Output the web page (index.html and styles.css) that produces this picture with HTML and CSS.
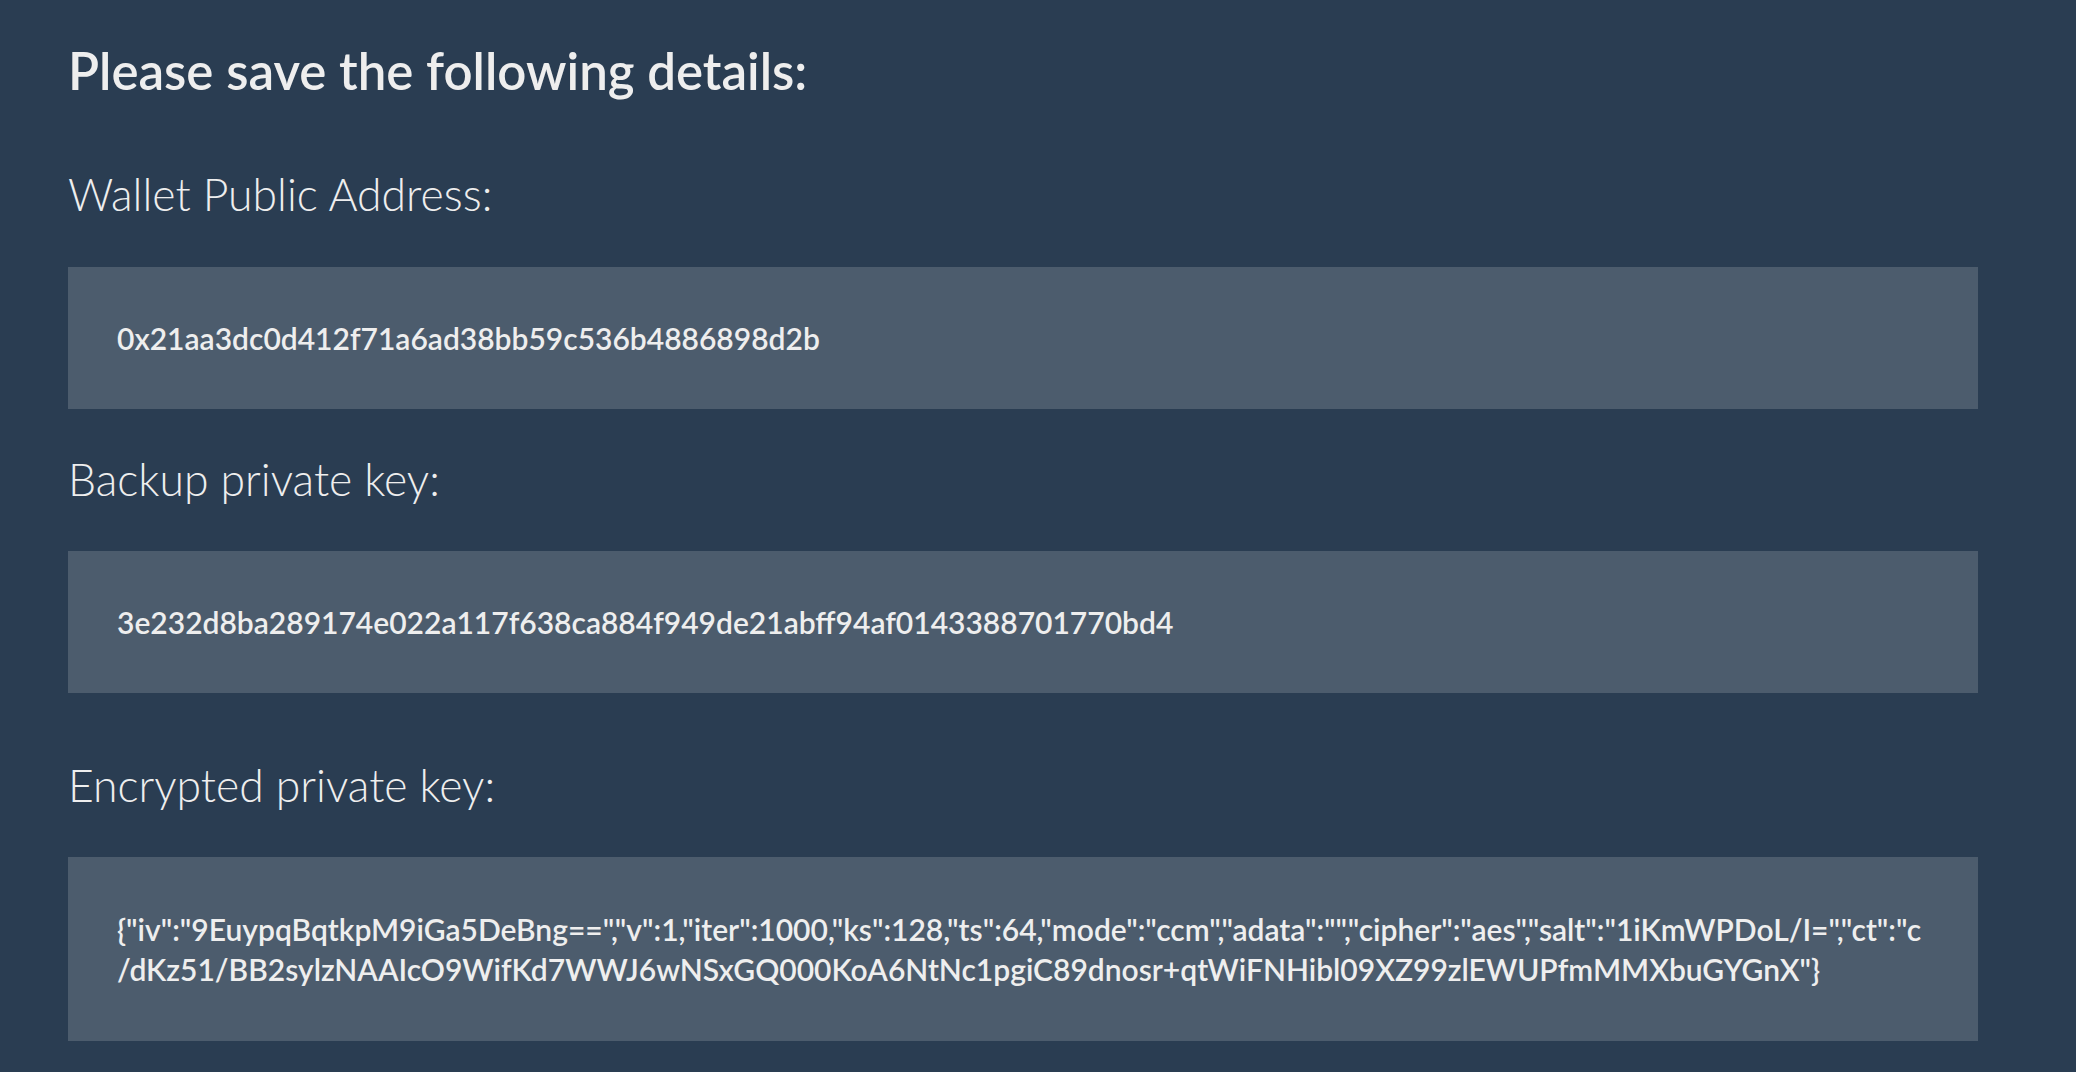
FILE: index.html
```html
<!DOCTYPE html>
<html lang="en">
<head>
<meta charset="utf-8">
<title>Wallet details</title>
<link rel="stylesheet" href="styles.css">
</head>
<body>
<main class="page">
  <h1 class="title">Please save the following details:</h1>
  <section class="field">
    <h2 class="label">Wallet Public Address:</h2>
    <div class="value">0x21aa3dc0d412f71a6ad38bb59c536b4886898d2b</div>
  </section>
  <section class="field">
    <h2 class="label">Backup private key:</h2>
    <div class="value">3e232d8ba289174e022a117f638ca884f949de21abff94af0143388701770bd4</div>
  </section>
  <section class="field field-wide">
    <h2 class="label">Encrypted private key:</h2>
    <div class="value">{"iv":"9EuypqBqtkpM9iGa5DeBng==","v":1,"iter":1000,"ks":128,"ts":64,"mode":"ccm","adata":"","cipher":"aes","salt":"1iKmWPDoL/I=","ct":"c<br>/dKz51/BB2sylzNAAIcO9WifKd7WWJ6wNSxGQ000KoA6NtNc1pgiC89dnosr+qtWiFNHibl09XZ99zlEWUPfmMMXbuGYGnX"}</div>
  </section>
</main>
</body>
</html>
```
FILE: styles.css
```css
html, body {
  margin: 0;
  padding: 0;
  background: #2a3d52;
}
body {
  font-family: Lato, "Open Sans", sans-serif;
  color: #eeeeee;
}
.page {
  padding: 40px 98px 0 68px;
  display: flex;
  flex-direction: column;
}
.title {
  margin: 0 0 66px;
  font-size: 51px;
  font-weight: 600;
  line-height: 1.2;
}
.field {
  display: flex;
  flex-direction: column;
  gap: 46px;
  margin-bottom: 43px;
}
.field-wide {
  margin-top: 22px;
}
.label {
  margin: 0;
  font-size: 44.5px;
  font-weight: 300;
  line-height: 1.2;
}
.value {
  background: #4c5c6d;
  padding: 51px 49px;
  font-size: 30px;
  font-weight: 600;
  line-height: 40px;
  word-break: break-all;
}
.field-wide .value {
  padding-top: 52px;
  padding-bottom: 52px;
}
```
